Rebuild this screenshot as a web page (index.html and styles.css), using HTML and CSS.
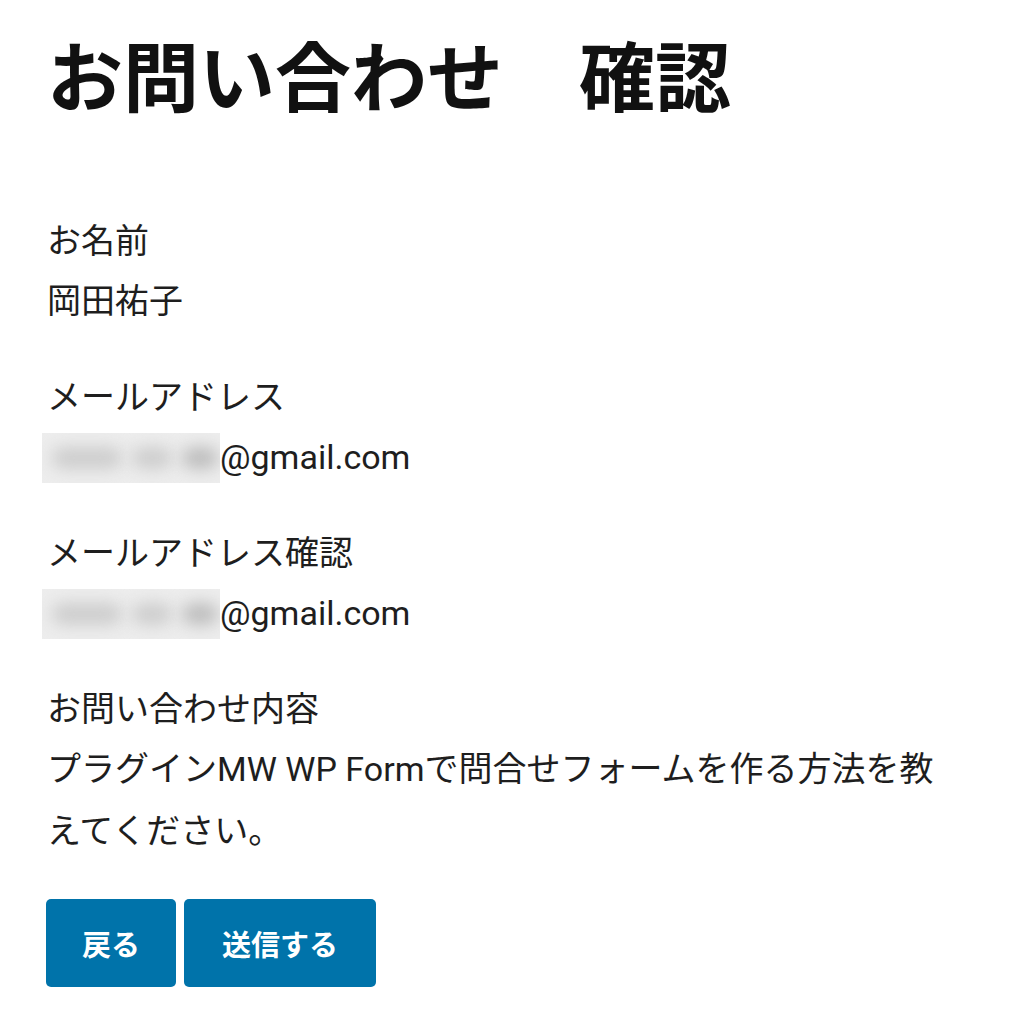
FILE: index.html
```html
<!DOCTYPE html>
<html lang="ja">
<head>
<meta charset="utf-8">
<title>お問い合わせ 確認</title>
<link rel="stylesheet" href="styles.css">
</head>
<body>
<main class="page">
  <h1 class="title">お問い合わせ　確認</h1>
  <div class="fields">
    <div class="field">
      <p class="label">お名前</p>
      <p class="value">岡田祐子</p>
    </div>
    <div class="field">
      <p class="label">メールアドレス</p>
      <p class="value"><span class="blur"><span class="blob b1"></span><span class="blob b2"></span><span class="blob b3"></span></span>@gmail.com</p>
    </div>
    <div class="field">
      <p class="label">メールアドレス確認</p>
      <p class="value"><span class="blur"><span class="blob b1"></span><span class="blob b2"></span><span class="blob b3"></span></span>@gmail.com</p>
    </div>
    <div class="field">
      <p class="label">お問い合わせ内容</p>
      <p class="value">プラグインMW WP Formで問合せフォームを作る方法を教えてください。</p>
    </div>
  </div>
  <div class="actions">
    <button class="btn" type="button">戻る</button>
    <button class="btn btn-wide" type="button">送信する</button>
  </div>
</main>
</body>
</html>
```

FILE: styles.css
```css
html, body {
  margin: 0;
  padding: 0;
  background: #ffffff;
}
body {
  font-family: "Noto Sans CJK JP", "Noto Sans", sans-serif;
  color: #1e1e1e;
}
.page {
  padding: 18px 47px 0 46px;
  width: 910px;
}
.title {
  margin: 0 0 0 1px;
  font-size: 76px;
  line-height: 110px;
  font-weight: 700;
  color: #111111;
  letter-spacing: 0;
}
.fields {
  margin-top: 80px;
  margin-left: 1px;
}
.field {
  margin-bottom: 32px;
}
.label, .value {
  margin: 0;
  font-size: 34px;
  line-height: 62px;
}
.value {
  font-family: "Roboto", "Noto Sans CJK JP", sans-serif;
}
.blur {
  display: inline-block;
  position: relative;
  width: 178px;
  height: 50px;
  vertical-align: -14px;
  margin-left: -5px;
  background: #ededed;
  overflow: hidden;
}
.blob {
  position: absolute;
  top: 14px;
  height: 22px;
  border-radius: 11px;
  background: #cdcdcd;
  filter: blur(8px);
}
.b1 { left: 10px; width: 70px; }
.b2 { left: 90px; width: 40px; }
.b3 { left: 140px; width: 36px; background: #bdbdbd; }
.actions {
  display: flex;
  gap: 8px;
  margin-top: 37px;
}
.btn {
  font-family: "Noto Sans CJK JP", sans-serif;
  font-size: 29px;
  font-weight: 700;
  color: #ffffff;
  background: #0073aa;
  border: none;
  border-radius: 5px;
  height: 88px;
  width: 130px;
  padding: 0;
}
.btn-wide {
  width: 192px;
}
```
